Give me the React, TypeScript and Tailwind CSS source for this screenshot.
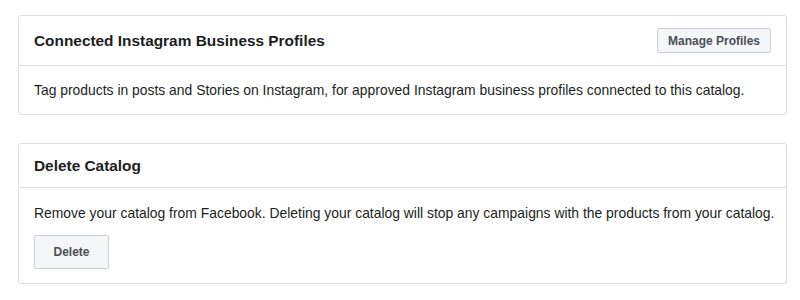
export default function App() {
  return (
    <div className="min-h-[300px] bg-white pt-[15px] pl-[18px] font-['Liberation_Sans',Arial,sans-serif] text-[#1c1e21]">
      <div className="w-[769px] rounded-[3px] border border-[#dddfe2]">
        <div className="flex h-[50px] items-center justify-between border-b border-[#dddfe2] pl-[15px] pr-[15px]">
          <h2 className="text-[15.4px] font-bold">Connected Instagram Business Profiles</h2>
          <button className="h-[25px] w-[114px] rounded-[2px] border border-[#ccd0d5] bg-[#f5f6f7] text-[12px] font-bold text-[#4b4f56]">
            Manage Profiles
          </button>
        </div>
        <div className="flex h-[48px] items-center whitespace-nowrap px-[15px] text-[13.9px]">
          Tag products in posts and Stories on Instagram, for approved Instagram business profiles connected to this catalog.
        </div>
      </div>

      <div className="mt-[28px] w-[769px] rounded-[3px] border border-[#dddfe2]">
        <div className="flex h-[44px] items-center border-b border-[#dddfe2] px-[15px]">
          <h2 className="text-[15.4px] font-bold">Delete Catalog</h2>
        </div>
        <div className="px-[15px] pt-[16px] pb-[14px]">
          <p className="whitespace-nowrap text-[13.9px] leading-[18px]">
            Remove your catalog from Facebook. Deleting your catalog will stop any campaigns with the products from your catalog.
          </p>
          <button className="mt-[13px] h-[34px] w-[75px] rounded-[2px] border border-[#ccd0d5] bg-[#f5f6f7] text-[12px] font-bold text-[#4b4f56]">
            Delete
          </button>
        </div>
      </div>
    </div>
  );
}
